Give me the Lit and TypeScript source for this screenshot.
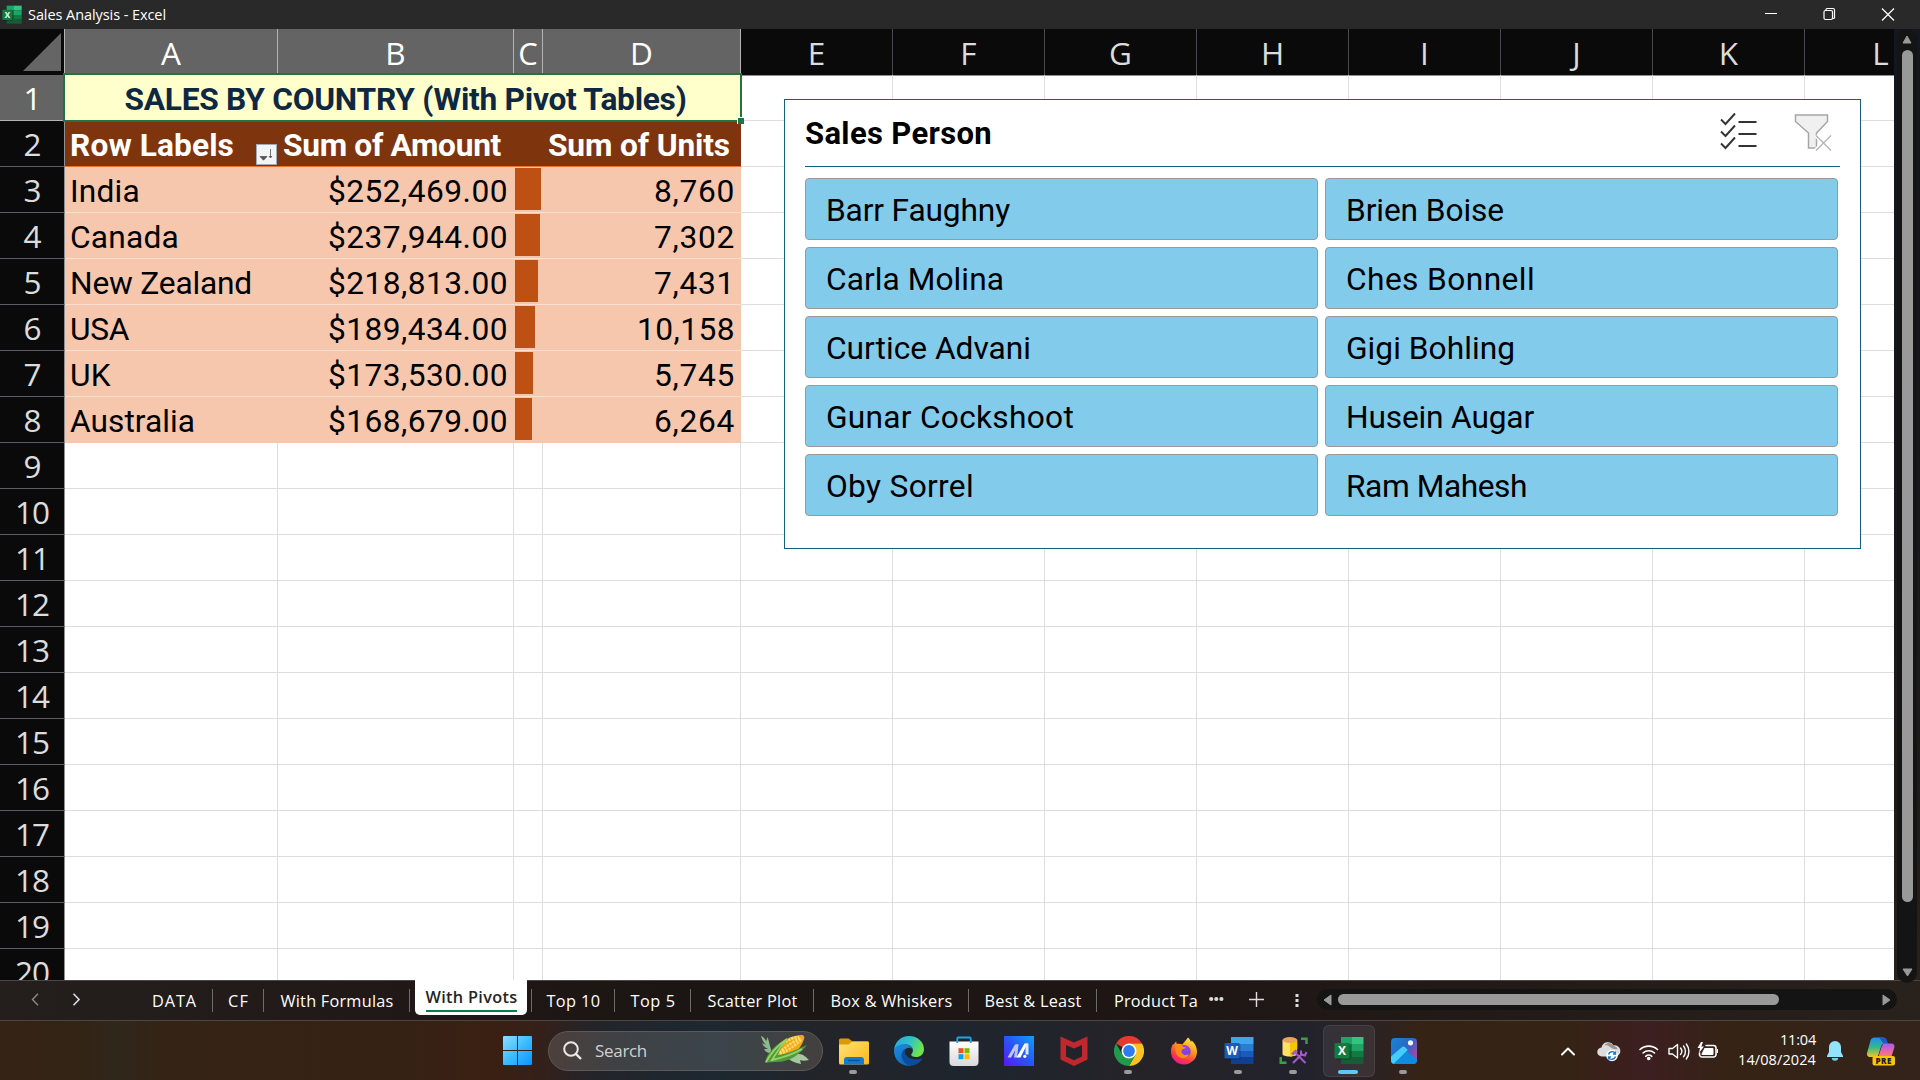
import { LitElement, html, css, svg } from "lit";
import { customElement, property } from "lit/decorators.js";
import { classMap } from "lit/directives/class-map.js";

/** A run of text tracked so that its advance equals `w` pixels. */
@customElement("text-run")
class TextRun extends LitElement {
  @property({ type: Number }) w = 0;
  static styles = css`
    :host { display: inline-block; white-space: pre; }
  `;
  updated() {
    this.style.letterSpacing = "0px";
    const n = (this.textContent ?? "").length;
    const natural = this.getBoundingClientRect().width;
    if (n && this.w) this.style.letterSpacing = `${((this.w - natural) / n).toFixed(3)}px`;
  }
  render() { return html`<slot></slot>`; }
}

const run = (t: string, w: number) => html`<text-run .w=${w}>${t}</text-run>`;

const COLS = ["A", "B", "C", "D", "E", "F", "G", "H", "I", "J", "K", "L"];

const DATA: [string, number, string, number, number, string, number][] = [
  ["India", 70, "$252,469.00", 180, 26, "8,760", 81],
  ["Canada", 109, "$237,944.00", 180, 25, "7,302", 81],
  ["New Zealand", 182, "$218,813.00", 180, 23, "7,431", 81],
  ["USA", 59, "$189,434.00", 180, 20, "10,158", 98],
  ["UK", 41, "$173,530.00", 180, 18, "5,745", 81],
  ["Australia", 125, "$168,679.00", 180, 17, "6,264", 81],
];

const PEOPLE: [string, number][] = [
  ["Barr Faughny", 184], ["Brien Boise", 158],
  ["Carla Molina", 178], ["Ches Bonnell", 189],
  ["Curtice Advani", 205], ["Gigi Bohling", 169],
  ["Gunar Cockshoot", 248], ["Husein Augar", 188],
  ["Oby Sorrel", 148], ["Ram Mahesh", 181],
];

// label, tab width up to its separator, text width
const TABS: [string, number, number][] = [
  ["DATA", 77, 45], ["CF", 51, 21], ["With Formulas", 146, 113],
  ["With Pivots", 122, 92],
  ["Top 10", 83, 54], ["Top 5", 76, 45], ["Scatter Plot", 123, 90],
  ["Box & Whiskers", 155, 122], ["Best & Least", 128, 97],
];

const officeIcon = (letter: string, c: string[]) => svg`
  <rect x="7" y="1" width="11.5" height="7" fill=${c[0]}/><rect x="18" y="1" width="11.5" height="7" fill=${c[1]}/>
  <rect x="7" y="8" width="11.5" height="7" fill=${c[2]}/><rect x="18" y="8" width="11.5" height="7" fill=${c[3]}/>
  <rect x="7" y="15" width="11.5" height="6.5" fill=${c[4]}/><rect x="18" y="15" width="11.5" height="6.5" fill=${c[5]}/>
  <rect x="7" y="21" width="22.5" height="7" fill=${c[6]}/>
  <rect x="1.5" y="8" width="15" height="15.5" rx="1" fill="#000" opacity=".25"/>
  <rect x="0.5" y="7" width="15" height="15.5" rx="1" fill=${c[7]}/>
  <text x="8" y="19" text-anchor="middle" font-family="Open Sans, sans-serif" font-weight="700" font-size="12" fill="#fff">${letter}</text>`;
const EXCEL = ["#21a366", "#33c481", "#107c41", "#21a366", "#185c37", "#107c41", "#185c37", "#107c41"];
const WORD = ["#41a5ee", "#41a5ee", "#2b7cd3", "#2b7cd3", "#185abd", "#185abd", "#103f91", "#185abd"];

const svg30 = (body: unknown) => html`<svg width="30" height="30" viewBox="0 0 30 30">${body}</svg>`;

const ICONS = {
  folder: svg30(svg`
    <path d="M0 4a1.5 1.5 0 0 1 1.5-1.5h8L13 5h15.5A1.500 1.500 0 0 1 30 6.500V12H0Z" fill="#dd9a05"/>
    <path d="M0 8.500h10L12.500 6H28.500A1.500 1.500 0 0 1 30 7.500V27a1.500 1.500 0 0 1-1.500 1.500h-27A1.500 1.500 0 0 1 0 27Z" fill="url(#fold)"/>
    <path d="M5 28.500V24a3 3 0 0 1 3-3h14a3 3 0 0 1 3 3v4.500Z" fill="#0f7bd4"/>
    <path d="M9 24.500h12" stroke="#0a4f98" stroke-width="1.300"/>
    <defs><linearGradient id="fold" x1="0" y1="0" x2="1" y2="1"><stop offset="0" stop-color="#ffe07a"/><stop offset="1" stop-color="#fdb913"/></linearGradient></defs>`),
  edge: svg30(svg`
    <defs>
      <linearGradient id="e1" x1="0" y1="0" x2="1" y2=".4"><stop offset="0" stop-color="#2aa5e0"/><stop offset=".55" stop-color="#2fc3c8"/><stop offset="1" stop-color="#6fe34b"/></linearGradient>
      <linearGradient id="e2" x1="0" y1="0" x2=".6" y2="1"><stop offset="0" stop-color="#1b8fde"/><stop offset="1" stop-color="#1166c4"/></linearGradient>
    </defs>
    <path d="M15 0C23.500 0 30 6 30 13.200c0 5-3.800 7.800-8 7.800-3.400 0-4.800-1.400-4.800-2.300 0-.9 1.700-1.600 1.700-4.200C18.900 11 16 8.500 11 8.500 5 8.500.8 12.500.1 14 .6 6 7 0 15 0Z" fill="url(#e1)"/>
    <path d="M0 14.500C.5 11 4.500 8.300 9.500 8.300c5.500 0 9.300 2.700 9.400 6.200 0-1.600-1.800-2.800-3.900-2.800-3.500 0-6 3.300-6 7.300 0 5.500 4.500 9.700 9 10.400C8 31.500 0 24.500 0 14.500Z" fill="url(#e2)"/>
    <path d="M11.700 12.600C8.500 14.500 7.500 17 7.500 19.500c0 5.500 5 10.200 10.500 10 5-.5 8-3 10-6.200.3-.6-.1-1-.7-.7-1.300.6-2.800 1-4.300 1-6 0-11-3-12-6.600-.4-1.600-.2-3.200.7-4.400Z" fill="#0c4d99"/>`),
  store: svg30(svg`
    <defs><linearGradient id="st" x1="0" y1="0" x2="0" y2="1"><stop offset="0" stop-color="#fff"/><stop offset="1" stop-color="#d9d9dc"/></linearGradient></defs>
    <path d="M.5 5.500h29V26a4 4 0 0 1-4 4h-21a4 4 0 0 1-4-4Z" fill="url(#st)"/>
    <path d="M8.300 7V2.500a1 1 0 0 1 1-1h11.400a1 1 0 0 1 1 1V7" fill="none" stroke="#1ea7e8" stroke-width="1.800"/>
    <path d="M9.500 12.200h5v5h-5Z" fill="#f25022"/><path d="M15.500 12.200h5v5h-5Z" fill="#7fba00"/>
    <path d="M9.500 18.200h5v5h-5Z" fill="#00a4ef"/><path d="M15.500 18.200h5v5h-5Z" fill="#ffb900"/>`),
  asus: svg30(svg`
    <defs><linearGradient id="as" x1="0" y1="1" x2="1" y2="0"><stop offset="0" stop-color="#5a18f5"/><stop offset=".5" stop-color="#2a55f5"/><stop offset="1" stop-color="#0aa0fc"/></linearGradient></defs>
    <path d="M0 0h30v30H0Z" fill="url(#as)"/>
    <path d="M3.500 21.500 11 8.500h3.500L7 21.500Z" fill="#dfe8ff" opacity=".8"/><path d="M12 8.500h2.500l-1.500 13h-3Z" fill="#b8c8ff"/>
    <path d="M12.500 21.500 20.500 7.500h3l-7 14Z" fill="#fff"/><path d="M21.500 7.500h3v11h-3Z" fill="#dfe8ff"/><circle cx="20.800" cy="20.300" r="1.600" fill="#fff"/>`),
  mcafee: svg30(svg`
    <path d="M1.500 .5 15 6.500 28.500 .5v23L15 30 1.500 23.500ZM7 9v11.500l8 3.800 8-3.800V9l-8 3.600Z" fill="#c0282d" fill-rule="evenodd"/>`),
  chrome: svg30(svg`
    <path d="M15 15 2 7.500A15 15 0 0 1 28 7.500H15Z" fill="#e33b2e"/>
    <path d="M15 7.500h13A15 15 0 0 1 15 30l6.500-11.250Z" fill="#fcc31e"/>
    <path d="M2 7.500 8.500 18.750 15 22.500 21.500 18.700 15 30A15 15 0 0 1 2 7.500Z" fill="#229a4c"/>
    <circle cx="15" cy="15" r="7.500" fill="#fff"/><circle cx="15" cy="15" r="5.900" fill="#2e7cf0"/>`),
  firefox: svg30(svg`
    <defs>
      <linearGradient id="ff" x1=".8" y1="0" x2=".3" y2="1"><stop offset="0" stop-color="#fff14f"/><stop offset=".4" stop-color="#ff9a1f"/><stop offset=".75" stop-color="#ff3a47"/><stop offset="1" stop-color="#e8158f"/></linearGradient>
      <radialGradient id="fp" cx=".6" cy=".2" r=".9"><stop offset="0" stop-color="#a040f0"/><stop offset="1" stop-color="#5b45d8"/></radialGradient>
    </defs>
    <path d="M19 1.500c1.500 1.300 2.400 3 3 4.500.2-.5.500-1 .7-1.500 3.600 2.900 5.300 7.500 5.300 11.200A12.900 12.900 0 0 1 15 28.500 12.900 12.900 0 0 1 2 15.500c0-3.500 1-6 2.300-7.800.1.700.2 1 .4 1.400.7-1.700 1.500-2.800 2.600-3.500 0 .8.100 1.700.5 2.300 1.600-.5 4-.3 5.600.5 1.500-2 3-3.500 5.600-6.900Z" fill="url(#ff)"/>
    <circle cx="15.500" cy="15.300" r="6.200" fill="url(#fp)"/>
    <path d="M6 10c3-1.500 6-1 8 .7l2.600.5c-.5 1.500-2.300 1.800-3.600 2.200-.8 1.600-1 3.600 1.600 5 2.300 1 4.500.5 5.400-.6-.8 3.500-4 5-7.200 4.300C8 21 6 17 6 10Z" fill="#ff8a16"/>`),
  word: svg30(officeIcon("W", WORD)),
  sql: svg30(svg`
    <path d="M3.500 4v14c0 1.500 3 2.500 7 2.500s7.500-1 7.500-2.500V4Z" fill="#ffe066"/><path d="M11 4h7.300v9L13 20.500h-2Z" fill="#f5c800"/>
    <ellipse cx="10.900" cy="4" rx="7.400" ry="2.900" fill="#e9a55f"/>
    <path d="M22 2.700h5.500V8" fill="none" stroke="#3f9b45" stroke-width="2.500"/><path d="M1.700 21v5.700H7.500" fill="none" stroke="#3f9b45" stroke-width="2.500"/>
    <path d="M14 27 23.500 17.500M26.500 27 15.500 16" stroke="#a557c9" stroke-width="2.100"/>
    <path d="M12 17.500 16.500 13.500l2.500 1.500-4.500 4.500Z" fill="#a557c9"/><path d="M22 14.500v4l4 1 1.500-3.500" fill="none" stroke="#a557c9" stroke-width="2"/>`),
  excel: svg30(officeIcon("X", EXCEL)),
  photos: svg30(svg`
    <defs>
      <linearGradient id="ph" x1="0" y1="0" x2="1" y2=".6"><stop offset="0" stop-color="#1585d8"/><stop offset=".6" stop-color="#2d66c4"/><stop offset="1" stop-color="#a04aa0"/></linearGradient>
      <clipPath id="pc"><rect x="2" y="2" width="26" height="26" rx="4"/></clipPath>
    </defs>
    <g clip-path="url(#pc)"><path d="M2 2h26v26H2Z" fill="url(#ph)"/><circle cx="21.500" cy="6.800" r="2.600" fill="#eef6ff"/>
    <path d="M2 26 13 12 28 23v5H2Z" fill="#0f8be0"/>
    <path d="M2 20.500 12.500 11.500a3 3 0 0 1 4.200.2l2 2.300L4.500 28H2Z" fill="#43cdfb"/></g>`),
};

const APPS: [keyof typeof ICONS, string][] = [
  ["folder", "run"], ["edge", "idle"], ["store", "idle"], ["asus", "idle"], ["mcafee", "idle"], ["chrome", "run"],
  ["firefox", "idle"], ["word", "run"], ["sql", "run"], ["excel", "active"], ["photos", "run"],
];

@customElement("app-root")
class AppRoot extends LitElement {
  static styles = css`
    :host { display: block; width: 1920px; height: 1080px; overflow: hidden; }
    * { box-sizing: border-box; }
    svg { display: block; flex: none; }
    .screen { display: flex; flex-direction: column; width: 1920px; height: 1080px; font-family: "Open Sans", "Noto Sans", sans-serif; }

    .title { height: 29px; background: #292929; color: #fff; display: flex; align-items: center; font-size: 14.500px; padding-left: 2px; }
    .title .name { margin-left: 6px; flex: 1; line-height: 28px; }

    .main { height: 951px; display: flex; background: linear-gradient(#121722, #17171c 50%, #221c18 85%, #2a211b); }
    .sheet { position: relative; width: 1894px; height: 951px; overflow: hidden; background: #fff; }
    .row { display: grid; grid-template-columns: 65px 213px 236px 29px 198px repeat(7, 152px) 152px; width: 2110px; height: 46px; }
    .ch, .rh { font-size: 31.500px; line-height: 45px; text-align: center; color: #dcdcdc; background: #0a0a0a; font-weight: 400; }
    .ch { border-right: 1px solid #4a4a4e; border-bottom: 1px solid #8f8f8f; line-height: 44px; padding-top: 2px; }
    .ch.sel { background: #646464; color: #fff; border-color: #b4b4b4; border-bottom-color: #646464; }
    .ch.thin { font-size: 31px; }
    .rh { border-right: 1px solid #8f8f8f; border-bottom: 1px solid #5c5c62; letter-spacing: -1px; }
    .rh.sel { background: #646464; color: #fff; border-bottom-color: #b4b4b4; }
    .corner { background: #0a0a0a; border-right: 1px solid #b4b4b4; border-bottom: 1px solid #b4b4b4; }
    .c { border-right: 1px solid #dedede; border-bottom: 1px solid #dedede; font-family: Roboto, sans-serif; font-size: 31.700px; line-height: 44px; padding: 3px 6px 0 5px; white-space: nowrap; color: #000; overflow: hidden; }
    .hd { background: #7e350e; color: #fff; font-weight: 700; border-right: 0; border-bottom-color: #e97132; display: flex; }
    .hd.first { padding-right: 1px; justify-content: space-between; }
    .hd svg { margin-top: 20px; }
    .pv { background: #f6c7ac; border-right: 0; border-bottom-color: #fae0d3; }
    .pv.last { border-bottom-color: #f6c7ac; }
    .r { text-align: right; }
    .pv.bar { padding: 1px; }
    .fill { height: 42px; background: #be5014; }
    .merged { grid-column: span 4; background: #ffffcc; color: #0e2841; font-weight: 700; text-align: center; padding: 3px 0 0 6px; }
    .selection { position: absolute; left: 63px; top: 44px; width: 679px; height: 49px; border: 2px solid #217346; }
    .handle { position: absolute; right: -4px; bottom: -4px; width: 7px; height: 7px; background: #217346; border: 1px solid #fff; border-width: 1px 0 0 1px; }

    .slicer { position: absolute; left: 784px; top: 70px; width: 1077px; height: 450px; background: #fff; border: 1px solid #156082; padding: 0 20px; font-family: Roboto, sans-serif; color: #000; }
    .shead { height: 67px; width: 1035px; border-bottom: 1px solid #156082; display: flex; align-items: center; font-weight: 700; font-size: 31px; line-height: 66px; padding-right: 7px; }
    .shead text-run { padding-top: 2px; }
    .shead .grow { flex: 1; }
    .chips { margin-top: 11px; display: grid; grid-template-columns: 513px 513px; grid-auto-rows: 62px; gap: 7px; }
    .chip { background: #83cbeb; border: 1px solid #999; border-radius: 4px; padding: 2px 0 0 20px; font-size: 31.700px; line-height: 60px; white-space: nowrap; }

    .vscroll { margin-left: 3px; width: 20px; height: 954px; border-radius: 10px; background: #141414; display: flex; flex-direction: column; align-items: center; padding-top: 6px; position: relative; z-index: 1; flex: none; }
    .vthumb { width: 11px; height: 852px; border-radius: 6px; background: #999; margin: 6px 0 66px; }

    .tabs { height: 40px; background: linear-gradient(90deg, #241f1d, #1f1715 25%, #1b1613 36%, #1e1614 60%, #231b18 80%, #29211c); border-top: 1px solid #4a4643; display: flex; align-items: flex-start; font-size: 16.300px; color: #fff; white-space: nowrap; }
    .nav { width: 136px; padding: 12px 0 0 30px; display: flex; gap: 28px; }
    .tab { height: 40px; display: flex; justify-content: center; position: relative; line-height: 40px; }
    .tab::after { content: ""; position: absolute; right: 0; top: 8px; width: 1px; height: 23px; background: #6f6b69; }
    .tab.on { justify-content: flex-start; padding-left: 5px; }
    .paper { margin-top: -1px; width: 112px; height: 35px; background: #fff; border-radius: 0 0 5px 5px; color: #262626; font-weight: 600; display: flex; justify-content: center; line-height: 35px; }
    .under { width: 91px; height: 32px; border-bottom: 2px solid #107c41; }
    .part { width: 110px; padding-left: 17px; line-height: 40px; }
    .hscroll { margin-top: 8px; width: 580px; height: 21px; border-radius: 11px; background: #141414; display: flex; align-items: center; padding: 0 6px; }
    .hthumb { width: 441px; height: 11px; border-radius: 6px; background: #999; margin: 0 auto 0 6px; }

    .task { height: 60px; border-top: 1px solid #4d4642; display: flex; align-items: center; color: #fff; padding-left: 503px;
      background: linear-gradient(90deg, #352315 0, #332415 4%, #2f271a 6%, #352315 9%, #352214 20%, #3a2013 26%, #35201a 28%, #23242a 31%, #1d2830 37%, #222429 43%, #1f252e 50%, #252328 60%, #22222c 68%, #2a2226 71%, #352315 74%, #352315 82%, #3b1f1b 84%, #3c1f20 86%, #352315 90%, #33231a 100%); }
    .search { margin-left: 16px; width: 275px; height: 40px; border-radius: 20px; border: 1px solid #5e5956; background: linear-gradient(90deg, #4c403c, #3f4144 25%, #3b454b 60%, #43403f); display: flex; align-items: center; padding: 0 12px 0 14px; font-size: 17px; color: #d0d0d0; }
    .search text-run { margin: 0 auto 0 13px; }
    .apps { display: flex; margin-left: 3px; }
    .app { width: 55px; height: 59px; display: flex; justify-content: center; align-items: center; position: relative; }
    .app.active::before { content: ""; position: absolute; left: 2px; top: 4px; width: 50px; height: 50px; border-radius: 6px; background: #ffffff12; border: 1px solid #ffffff14; }
    .app svg { position: relative; }
    .app.run::after, .app.active::after { content: ""; position: absolute; left: 23px; top: 49px; width: 8px; height: 4px; border-radius: 2px; background: #9a9a9a; }
    .app.active::after { left: 17px; width: 20px; background: #5cc8f8; }
    .tray { flex: 1; display: flex; align-items: center; justify-content: flex-end; padding-right: 25px; }
    .clock { width: 84px; text-align: right; font-size: 14.500px; line-height: 20px; margin: 0 11px 0 14px; padding-bottom: 2px; white-space: nowrap; }
  `;

  private header() {
    return html`<div class="row">
      <div class="corner"><svg width="64" height="45" viewBox="0 0 64 45"><path d="M61 4v38H23Z" fill="#656565"/></svg></div>
      ${COLS.map((c, i) => html`<div class=${classMap({ ch: true, sel: i < 4, thin: c === "C" })}>${c}</div>`)}
    </div>`;
  }

  private cells(n: number) {
    const blanks = (k: number) => Array.from({ length: k }, () => html`<div class="c"></div>`);
    if (n === 1) return html`<div class="c merged">${run("SALES BY COUNTRY (With Pivot Tables)", 562)}</div>${blanks(8)}`;
    if (n === 2) return html`
      <div class="c hd first">${run("Row Labels", 164)}
        <svg width="21" height="21" viewBox="0 0 21 21"><rect x=".5" y=".5" width="20" height="20" fill="#f2f4f8" stroke="#a3aab5"/><path d="M4 12.500h7l-3.500 3.700ZM14.500 5v8M13 12l1.500 2 1.500-2" fill="#555" stroke="#555" stroke-width=".8"/></svg>
      </div>
      <div class="c hd">${run("Sum of Amount", 218)}</div><div class="c hd"></div>
      <div class="c hd">${run("Sum of Units", 182)}</div>${blanks(8)}`;
    const d = DATA[n - 3];
    if (!d) return blanks(12);
    const pv = (x: string) => `c pv ${x} ${n === 8 ? "last" : ""}`;
    return html`
      <div class=${pv("")}>${run(d[0], d[1])}</div>
      <div class=${pv("r")}>${run(d[2], d[3])}</div>
      <div class=${pv("bar")}><div class="fill" style="width:${d[4]}px"></div></div>
      <div class=${pv("r")}>${run(d[5], d[6])}</div>${blanks(8)}`;
  }

  private slicer() {
    return html`<div class="slicer">
      <div class="shead">${run("Sales Person", 187)}<span class="grow"></span>
        <svg width="38" height="44" viewBox="0 0 38 44"><g fill="none" stroke="#333" stroke-width="2">
          <path d="M1 8.500 5.500 13 15 2.500M1 20.500 5.500 25 15 14.500M1 32.500 5.500 37 15 26.500" stroke-width="1.900"/>
          <path d="M18.500 11h18M18.500 23h18M18.500 35h18"/></g></svg>
        <svg width="75" height="44" viewBox="0 0 75 44"><path d="M37.500 4h32v6.500l-11 11.500v15h-8v-15l-13-11.500Z" fill="#f0f0f0" stroke="#a6a6a6" stroke-width="1.500"/>
          <path d="M58 24.500 72.500 39M72.500 24.500 58 39" stroke="#fff" stroke-width="4"/><path d="M58 24.500 73 39.500M73 24.500 58 39.500" stroke="#b5b5b5" stroke-width="1.400"/></svg>
      </div>
      <div class="chips">${PEOPLE.map(([t, w]) => html`<div class="chip">${run(t, w)}</div>`)}</div>
    </div>`;
  }

  private tray() {
    return html`<div class="tray">
      <svg width="157" height="30" viewBox="0 0 157 30"><g fill="none" stroke="#fff" stroke-width="1.600" stroke-linecap="round" stroke-linejoin="round">
        <path d="M1 18.500 7 12.500l6 6" stroke-width="1.900"/>
        <path d="M79 13.500a13 13 0 0 1 17.500 0M82 17a8.500 8.500 0 0 1 11.500 0M84.700 20.300a4.500 4.500 0 0 1 6.100 0"/>
        <path d="M108 12.500h3.500l5-4v13.500l-5-4H108Z" stroke-width="1.400"/><path d="M119.500 12a5 5 0 0 1 0 6.500M122.500 10a8.500 8.500 0 0 1 0 10.800M125.300 8a12 12 0 0 1 0 15" stroke-width="1.400"/>
        <path d="M145 9.500h7.500a2.500 2.500 0 0 1 2.500 2.500v6.500a2.500 2.500 0 0 1-2.500 2.500H141a2.500 2.500 0 0 1-2.500-2.500V17"/></g>
        <path d="M143.500 12h8a1 1 0 0 1 1 1v5a1 1 0 0 1-1 1h-10a1 1 0 0 1-.8-1.500ZM156 13h1.500v4H156ZM140 6l-3.500 6h2.500l-1 5 5-6.500h-2.700L142 6Z" fill="#fff"/>
        <circle cx="87.700" cy="22.500" r="1.800" fill="#fff"/>
        <path d="M41 20.500a4.500 4.500 0 0 1-.5-9 6.500 6.500 0 0 1 12-2 5.500 5.500 0 0 1 2.500 11Z" fill="#dcdcdc"/>
        <path d="M43 9.500a6 6 0 0 1 10 .5c2 .3 3 1.700 3.500 3-4 1-6-1-8-2.500-1.500-.8-3.500-1.500-5.500-1Z" fill="#9a9490"/>
        <circle cx="51" cy="19.500" r="5.800" fill="#fff"/><path d="M47.500 18.500a3.700 3.700 0 0 1 6.800-1M54.500 20.500a3.700 3.700 0 0 1-6.800 1M54.500 15.500v2.500H52M47.500 23.500V21H50" fill="none" stroke="#1777c8" stroke-width="1.400"/>
      </svg>
      <div class="clock">${run("11:04", 36)}<br>${run("14/08/2024", 78)}</div>
      <svg width="16" height="20" viewBox="0 0 16 20"><path d="M8 0a6 6 0 0 1 6 6v5l2 4v1H0v-1l2-4V6a6 6 0 0 1 6-6Z" fill="#92e4fc"/><path d="M4.800 17h6.400a3.200 2.800 0 0 1-6.400 0Z" fill="#7accdf"/></svg>
      <svg width="52" height="30" viewBox="1 0 52 30">
        <defs>
          <linearGradient id="c1" x1="0" y1="0" x2="0" y2="1"><stop offset="0" stop-color="#1d8df0"/><stop offset=".5" stop-color="#35b989"/><stop offset="1" stop-color="#f4c52c"/></linearGradient>
          <linearGradient id="c2" x1="0" y1="0" x2="0" y2="1"><stop offset="0" stop-color="#a15cf5"/><stop offset=".6" stop-color="#f067a0"/><stop offset="1" stop-color="#f58a5b"/></linearGradient>
        </defs>
        <path d="M30 1.500h11c2 0 3 1.500 3.500 3l1 3h-3c-2 0-3 1-3.500 3l-2.500 8c-.5 1.500-1.500 2.500-3 2.500h-5c-3 0-4-2-3.300-4.500l3-11c.5-2.200 1.500-4 4.800-4Z" fill="url(#c1)"/>
        <path d="M37 1.500h4.500c2 0 3 1.500 3.500 3l1 3h-3.500c-1 0-2-.5-2.500-2Z" fill="#2258c8"/>
        <path d="M42.500 7.500h6.500c3 0 4 2 3.200 4.500L49 22H36l3.500-11c.7-2.300 1.500-3.500 3-3.500Z" fill="url(#c2)"/>
        <rect x="30.500" y="20" width="22.500" height="9.500" rx="2" fill="#fdc40c"/>
        <text x="41.800" y="27.500" text-anchor="middle" font-family="Open Sans, sans-serif" font-size="8" font-weight="800" letter-spacing=".6" fill="#222">PRE</text>
      </svg>
    </div>`;
  }

  render() {
    return html`<div class="screen">
      <div class="title">
        <svg width="20" height="20" viewBox="0 0 30 30">${officeIcon("X", EXCEL)}</svg>
        <span class="name">${run("Sales Analysis - Excel", 138)}</span>
        <svg width="155" height="29" viewBox="1765 0 155 29"><g fill="none" stroke="#fff" stroke-width="1.200">
          <path d="M1765 13.500h12M1882 8.500l12 12M1894 8.500l-12 12"/><rect x="1824" y="10.500" width="8.500" height="9" rx="1.500"/>
          <path d="M1826 10V9.500a1 1 0 0 1 1-1h6a1.500 1.500 0 0 1 1.500 1.500v7.500a1 1 0 0 1-1 1H1833"/></g></svg>
      </div>
      <div class="main">
        <div class="sheet">
          ${this.header()}
          ${Array.from({ length: 20 }, (_, i) => html`<div class="row">
            <div class=${classMap({ rh: true, sel: i === 0 })}>${i + 1}</div>${this.cells(i + 1)}</div>`)}
          <div class="selection"><div class="handle"></div></div>
          ${this.slicer()}
        </div>
        <div class="vscroll">
          <svg width="10" height="9" viewBox="0 0 10 9"><path d="M5 1 9 8H1Z" fill="#999" stroke="#999" stroke-linejoin="round"/></svg>
          <div class="vthumb"></div>
          <svg width="11" height="9" viewBox="0 0 11 9"><path d="M5.500 8 10 1H1Z" fill="#999" stroke="#999" stroke-linejoin="round"/></svg>
        </div>
      </div>
      <div class="tabs">
        <div class="nav">
          <svg width="10" height="13" viewBox="0 0 10 13"><path d="M8 .8 2.500 6.500 8 12.200" fill="none" stroke="#8d8987" stroke-width="1.400"/></svg>
          <svg width="14" height="13" viewBox="0 0 14 13"><path d="M5.500 .8 11 6.500 5.500 12.200" fill="none" stroke="#dcdcdc" stroke-width="1.600"/></svg>
        </div>
        ${TABS.map(([t, w, tw]) => t === "With Pivots"
          ? html`<div class="tab on" style="width:${w}px"><div class="paper"><div class="under">${run(t, tw)}</div></div></div>`
          : html`<div class="tab" style="width:${w}px">${run(t, tw)}</div>`)}
        <div class="part">${run("Product Ta", 84)}</div>
        <svg width="110" height="38" viewBox="0 0 110 38">
          <g fill="#dcdcdc"><circle cx="4.200" cy="18" r="2.100"/><circle cx="9.300" cy="18" r="2.100"/><circle cx="14.400" cy="18" r="2.100"/>
          <path d="M88.500 13h3v3h-3ZM88.500 18h3v3h-3ZM88.500 23h3v3h-3Z"/></g>
          <path d="M42 18.500h15M49.500 11v15" stroke="#dcdcdc" stroke-width="1.400"/>
        </svg>
        <div class="hscroll">
          <svg width="9" height="12" viewBox="0 0 9 12"><path d="M8 1v10L1 6Z" fill="#999" stroke="#999" stroke-linejoin="round"/></svg>
          <div class="hthumb"></div>
          <svg width="9" height="12" viewBox="0 0 9 12"><path d="M1 1v10l7-5Z" fill="#999" stroke="#999" stroke-linejoin="round"/></svg>
        </div>
      </div>
      <div class="task">
        <svg width="29" height="29" viewBox="0 0 29 29"><defs><linearGradient id="w" gradientUnits="userSpaceOnUse" x1="0" y1="0" x2="29" y2="29"><stop offset="0" stop-color="#8be0ff"/><stop offset=".5" stop-color="#3fbcff"/><stop offset="1" stop-color="#0a94fb"/></linearGradient></defs>
          <path d="M1 0h13v14H0V1a1 1 0 0 1 1-1ZM15 0h13a1 1 0 0 1 1 1v13H15ZM0 15h14v14H1a1 1 0 0 1-1-1ZM15 15h14v13a1 1 0 0 1-1 1H15Z" fill="url(#w)"/></svg>
        <div class="search">
          <svg width="19" height="19" viewBox="0 0 19 19"><circle cx="8" cy="8" r="6.800" fill="none" stroke="#e8e8e8" stroke-width="2"/><path d="M12.800 12.800 18 18" stroke="#e8e8e8" stroke-width="2.400"/></svg>
          ${run("Search", 52)}
          <svg width="50" height="33" viewBox="0 0 50 33">
            <path d="M1 2c3 1 4 3 5 5 1-1 1-3 1-4 2 3 2 6 3 9l3 11-4-4c-3-1-4-2-5-4l4 0c-3-2-5-3-6-6l4 2C3 8 2 5 1 2Z" fill="#8fb98a"/>
            <path d="M26 22c5-2 9-3 13-2 4 0 7 3 10 6-4 1-7 1-9 0l1 4c-6-1-11-3-15-8Z" fill="#a4c79b"/>
            <path d="M12 20C15 11 26 2 41 1c3 0 4 2 3 4-3 11-14 19-26 20Z" fill="#f0a816"/>
            <path d="M16 17C20 10 29 4 39 3M20 20C27 17 36 11 42 5M17 21C24 14 32 8 41 4" stroke="#ffdc6b" stroke-width="2.600" stroke-dasharray="2.300 1" fill="none"/>
            <path d="M5 29C7 19 14 11 30 3c-6 6-10 12-12 18 9-1 18-5 29-10-7 9-17 17-30 17-4 0-8 0-12 1Z" fill="#4d9b3a"/>
            <path d="M6 28C12 17 18 11 27 5 19 14 16 20 12 26c9-2 20-5 30-11" stroke="#9bd068" stroke-width="1.800" fill="none"/>
          </svg>
        </div>
        <div class="apps">${APPS.map(([k, s]) => html`<div class="app ${s}">${ICONS[k]}</div>`)}</div>
        ${this.tray()}
      </div>
    </div>`;
  }
}
